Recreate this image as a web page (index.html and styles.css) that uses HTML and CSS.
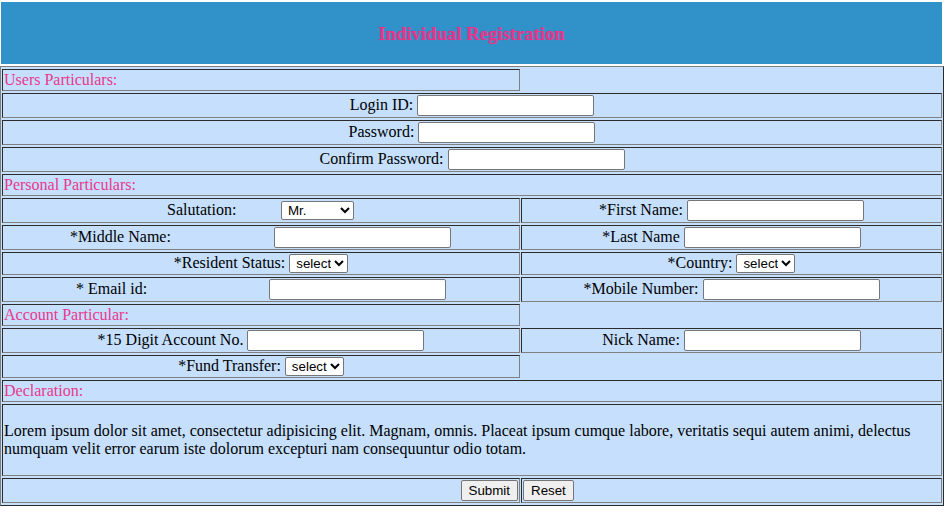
FILE: index.html
```html
<!DOCTYPE html>
<html>
<head>
<meta charset="utf-8">
<title>Individual Registration</title>
<link rel="stylesheet" href="styles.css">
</head>
<body>
<div class="banner"><h3 class="banner-title">Individual Registration</h3></div>
<table class="reg">
  <colgroup><col class="c1"><col class="c2"></colgroup>
  <tr><td class="sec">Users Particulars:</td></tr>
  <tr><td colspan="2" class="center">Login ID: <input type="text"></td></tr>
  <tr><td colspan="2" class="center">Password: <input type="password"></td></tr>
  <tr><td colspan="2" class="center">Confirm Password: <input type="password" class="wide"></td></tr>
  <tr><td colspan="2" class="sec">Personal Particulars:</td></tr>
  <tr>
    <td><div class="pair"><span class="lbl lbl-sal">Salutation:</span><select class="sel-sal"><option>Mr.</option><option>Mrs.</option><option>Ms.</option></select></div></td>
    <td class="center">*First Name: <input type="text"></td>
  </tr>
  <tr>
    <td><div class="pair"><span class="lbl lbl-mid">*Middle Name:</span><input type="text"></div></td>
    <td class="center">*Last Name <input type="text"></td>
  </tr>
  <tr>
    <td class="center">*Resident Status: <select class="sel"><option>select</option></select></td>
    <td class="center">*Country: <select class="sel"><option>select</option></select></td>
  </tr>
  <tr>
    <td><div class="pair"><span class="lbl lbl-mail">* Email id:</span><input type="text"></div></td>
    <td class="center">*Mobile Number: <input type="text"></td>
  </tr>
  <tr><td class="sec">Account Particular:</td></tr>
  <tr>
    <td class="center">*15 Digit Account No. <input type="text"></td>
    <td class="center">Nick Name: <input type="text"></td>
  </tr>
  <tr><td class="center">*Fund Transfer: <select class="sel"><option>select</option></select></td></tr>
  <tr><td colspan="2" class="sec">Declaration:</td></tr>
  <tr><td colspan="2"><p class="decl">Lorem ipsum dolor sit amet, consectetur adipisicing elit. Magnam, omnis. Placeat ipsum cumque labore, veritatis sequi autem animi, delectus numquam velit error earum iste dolorum excepturi nam consequuntur odio totam.</p></td></tr>
  <tr>
    <td class="right"><button type="submit" class="btn">Submit</button></td>
    <td class="left"><button type="reset" class="btn">Reset</button></td>
  </tr>
</table>
</body>
</html>
```
FILE: styles.css
```css
html, body {
  margin: 0;
  padding: 0;
  background: #ffffff;
}
body {
  font-family: "Liberation Serif", "Times New Roman", serif;
  font-size: 16px;
  color: #000;
}
.banner {
  margin: 2px 3px 0 1px;
  height: 62px;
  background: #3191c9;
  display: flex;
  align-items: center;
  justify-content: center;
}
.banner-title {
  margin: 2px 0 0 0;
  font-size: 18.72px;
  font-weight: bold;
  color: #e6358a;
  text-shadow: 0 0 1px rgba(230, 53, 138, 0.6);
}
.reg {
  margin-top: 2px;
  width: 944px;
  table-layout: fixed;
  border-collapse: separate;
  border-spacing: 1px 2px;
  background: #c5dffd;
  border: 1px solid;
  border-color: #808080 #2b2b2b #2b2b2b #808080;
}
.c1 { width: 518px; }
.c2 { width: 421px; }
.reg td {
  padding: 1px;
  border: 1px solid;
  border-color: #2b2b2b #808080 #808080 #2b2b2b;
  vertical-align: middle;
}
.reg td.sec {
  color: #e8388c;
}
.reg td.center { text-align: center; }
.reg td.right { text-align: right; }
.reg td.left { text-align: left; }
input {
  box-sizing: border-box;
  width: 177px;
  height: 21px;
  padding: 1px 2px;
  border: 1px solid #767676;
  border-radius: 2px;
  background: #fff;
  font-family: "Liberation Sans", Arial, sans-serif;
  font-size: 13.333px;
  margin: 0;
}
input.wide { width: 177px; }
select {
  box-sizing: border-box;
  height: 19px;
  padding: 0 0 0 2px;
  border: 1px solid #767676;
  border-radius: 2px;
  background: #fff;
  font-family: "Liberation Sans", Arial, sans-serif;
  font-size: 13.333px;
  color: #000;
  margin: 0;
}
.sel { width: 59px; }
.sel-sal { width: 73px; }
.pair {
  display: flex;
  align-items: baseline;
}
.lbl { flex: none; }
.lbl-sal { margin-left: 163px; width: 114px; }
.lbl-mid { margin-left: 66px; width: 204px; }
.lbl-mail { margin-left: 72px; width: 193px; }
.decl {
  margin: 16px 0;
  line-height: 18px;
}
.btn {
  box-sizing: border-box;
  height: 21px;
  padding: 1px 7px;
  border: 1px solid #767676;
  border-radius: 2px;
  background: #efefef;
  font-family: "Liberation Sans", Arial, sans-serif;
  font-size: 13.333px;
  color: #000;
  margin: 0;
}
```
